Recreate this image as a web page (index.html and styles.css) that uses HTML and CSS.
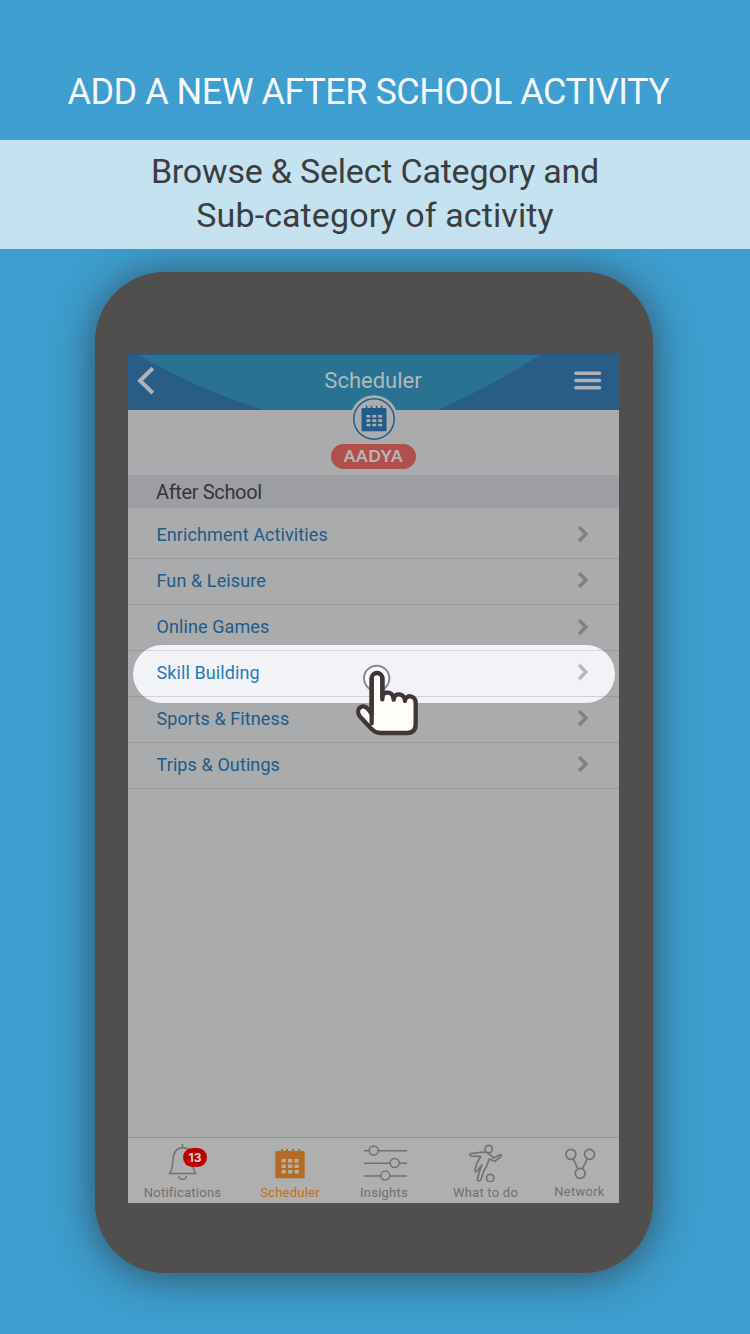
FILE: index.html
```html
<!DOCTYPE html>
<html lang="en">
<head>
<meta charset="utf-8">
<title>Add a new after school activity</title>
<link rel="stylesheet" href="styles.css">
</head>
<body>
<h1 class="headline">ADD A NEW AFTER SCHOOL ACTIVITY</h1>
<div class="banner">
  <div class="banner-first">Browse &amp; Select Category and</div>
  <div class="banner-second">Sub-category of activity</div>
</div>
<main class="phone">
  <div class="screen">
    <header class="topbar">
      <svg class="topbar-art" viewBox="128 354 491 56"><path d="M136.500 354Q194 388 263.500 410H437Q493 386 541 354Z" fill="#297291"/><path d="M128 354.500H619" stroke="#245b88"/></svg>
      <svg class="back" viewBox="0 0 20 30"><path d="M16.800 3.300 4 15.700 16.800 28" fill="none" stroke="#afb2b6" stroke-width="4"/></svg>
      <span class="title">Scheduler</span>
      <svg class="menu" viewBox="0 0 28 20"><path d="M2 3.200H25.500M2 10.500H25.500M2 17.800H25.500" stroke="#afb3b9" stroke-width="3.600" stroke-linecap="round"/></svg>
    </header>
    <section class="profile">
      <svg class="avatar" viewBox="0 0 50 50">
        <circle cx="25" cy="25" r="23.800" fill="#aaacad"/>
        <circle cx="25" cy="25" r="20.200" fill="none" stroke="#235c8b" stroke-width="1.500"/>
        <rect x="12.500" y="14" width="25" height="23.200" rx="1" fill="#235c8b"/>
        <path d="M17.600 11.800v4M22.500 11.800v4M27.600 11.800v4M32.600 11.800v4" stroke="#235c8b" stroke-width="1.500"/>
        <path d="M17.400 22.200h15.800M17.400 26.600h15.800M17.400 31h15.800" stroke="#aaacad" stroke-width="2.600" stroke-dasharray="4 1.900"/>
      </svg>
      <span class="name">AADYA</span>
    </section>
    <h2 class="section">After School</h2>
    <ul class="list">
      <li class="row first"><span>Enrichment Activities</span><svg class="chev" viewBox="0 0 12 18"><path d="M2 2 9 9 2 16"/></svg></li>
      <li class="row"><span>Fun &amp; Leisure</span><svg class="chev" viewBox="0 0 12 18"><path d="M2 2 9 9 2 16"/></svg></li>
      <li class="row"><span>Online Games</span><svg class="chev low" viewBox="0 0 12 18"><path d="M2 2 9 9 2 16"/></svg></li>
      <li class="row active"><span>Skill Building</span><svg class="chev" viewBox="0 0 12 18"><path d="M2 2 9 9 2 16"/></svg></li>
      <li class="row"><span>Sports &amp; Fitness</span><svg class="chev" viewBox="0 0 12 18"><path d="M2 2 9 9 2 16"/></svg></li>
      <li class="row"><span>Trips &amp; Outings</span><svg class="chev" viewBox="0 0 12 18"><path d="M2 2 9 9 2 16"/></svg></li>
    </ul>
    <nav class="tabs">
      <div class="tab tab-bell">
        <svg class="icon" viewBox="0 0 60 44"><path d="M29.500 6v4M16.800 35.500H42.600Q39.500 31 39.500 22C39.500 13 36 9.800 29.500 9.800S20.500 14 20 22Q19.500 31 16.800 35.500ZM25.600 37.500a3.900 4 0 0 0 7.800 0"/></svg>
        <span class="badge">13</span><span class="label">Notifications</span>
      </div>
      <div class="tab tab-cal">
        <svg class="icon" viewBox="0 0 60 44"><g stroke="none"><rect x="15.300" y="13" width="29.400" height="27.200" rx="1.500" fill="#b46c22"/></g><path d="M22 11v4M27 11v4M33 11v4M39 11v4" stroke="#b46c22" stroke-width="2"/><path d="M21.500 22.800h17.500M21.500 28.300h17.500M21.500 33.800h17.500" stroke="#b1afad" stroke-width="3.400" stroke-dasharray="4.300 2.200"/></svg>
        <span class="label">Scheduler</span>
      </div>
      <div class="tab tab-insights">
        <svg class="icon" viewBox="0 0 60 44"><path d="M10 12.700h5.200M24.200 12.700H53M10 25.300h26.200M45.200 25.300H53M10 38h16.800M35.800 38H53"/><circle cx="19.700" cy="12.500" r="4.500"/><circle cx="40.700" cy="25" r="4.500"/><circle cx="31.300" cy="37.600" r="4.500"/></svg>
        <span class="label">Insights</span>
      </div>
      <div class="tab tab-do">
        <svg class="icon" viewBox="0 0 60 44"><g transform="translate(-15.800 -8) scale(.33333)" stroke-width="5" stroke-linejoin="round"><circle cx="145.500" cy="57" r="11"/><circle cx="150" cy="144" r="11"/><path d="M91 71 130 66Q141 66 149 74L161 84 179 74Q186 74 182 80L164 94 147 87 139 109 132 120 122 149Q116 157 111 149L118 124 125 105 111 123Q104 130 105 119L110 99 122 80 93 78Q87 75 91 71Z"/></g></svg>
        <span class="label">What to do</span>
      </div>
      <div class="tab tab-net">
        <svg class="icon" viewBox="0 0 60 44"><g transform="translate(-109.800 -8) scale(.33333)" stroke-width="5"><circle cx="392" cy="73" r="15"/><circle cx="448" cy="73" r="15"/><circle cx="420" cy="130" r="15"/><path d="M399 87 413 116M441 87 427 116"/></g></svg>
        <span class="label">Network</span>
      </div>
    </nav>
  </div>
  <svg class="hand" viewBox="0 0 300 330">
    <circle cx="110" cy="115" r="38" fill="#fff" fill-opacity=".65" stroke="#8c8587" stroke-width="6"/>
    <path d="M95 222V115A16 16 0 0 1 127 115V171C127 154 157 151 161 175C166 158 188 159 195 178C202 162 227 168 227 188V253Q227 279 202 279H122Q105 279 94 266L61 231C42 207 68 187 85 208L95 222Z" fill="#fffdf8" stroke="#403638" stroke-width="13" stroke-linejoin="round"/>
    <path d="M95 115V250M127 112V178M161 171V179M195 174V183" fill="none" stroke="#403638" stroke-width="13" stroke-linecap="round"/>
  </svg>
</main>
</body>
</html>
```
FILE: styles.css
```css
* { box-sizing: border-box; }
body {
  margin: 0;
  width: 750px;
  height: 1334px;
  overflow: hidden;
  background: #3d9ecf;
  font-family: Roboto, "Liberation Sans", sans-serif;
}
.headline {
  margin: 0;
  height: 140px;
  padding: 71px 0 0 67.500px;
  color: #f4f8fc;
  font-size: 36px;
  font-weight: 400;
  line-height: 42px;
  letter-spacing: -.5px;
  white-space: nowrap;
}
.banner {
  position: relative;
  z-index: 1;
  height: 109px;
  padding-top: 9px;
  background: rgba(255, 255, 255, .7);
  color: #3b3d40;
  font-size: 34px;
  line-height: 44px;
  text-align: center;
  white-space: nowrap;
}
.banner-first { letter-spacing: -.2px; }
.banner-second { letter-spacing: .1px; }
.phone {
  position: relative;
  width: 558px;
  height: 1001px;
  margin: 23px 0 0 95px;
  padding: 82px 34px 70px 33px;
  border-radius: 70px;
  background: #514e4e;
  box-shadow: 0 3px 42px rgba(45, 50, 55, .75);
}
.screen {
  display: flex;
  flex-direction: column;
  height: 849px;
  background: #a9abad;
}
.topbar {
  position: relative;
  display: flex;
  justify-content: space-between;
  height: 56px;
  background: #295d88;
}
.topbar-art { position: absolute; inset: 0; width: 491px; height: 56px; }
.back { position: relative; width: 20px; height: 30px; margin: 11px 0 0 8px; }
.title { position: relative; margin: 13px 0 0 16.500px; color: #afb9c0; font-size: 22px; line-height: 27px; }
.menu { position: relative; width: 28px; height: 20px; margin: 16px 17.500px 0 0; }
.profile {
  position: relative;
  display: flex;
  flex-direction: column;
  align-items: center;
  height: 65px;
}
.avatar { width: 50px; height: 50px; margin-top: -15.700px; flex: none; }
.name {
  width: 85px;
  height: 25px;
  border-radius: 13px;
  background: #b14f4d;
  color: #bab2b2;
  font: 900 16.500px/24px Lato, sans-serif;
  letter-spacing: .7px;
  text-align: center;
}
.section {
  margin: 0;
  height: 33px;
  padding-left: 28px;
  background: #9d9ea3;
  color: #353537;
  font-size: 20px;
  font-weight: 400;
  line-height: 35px;
  letter-spacing: -.35px;
}
.list { margin: 0; padding: 0; list-style: none; color: #1f5b87; font-size: 18px; letter-spacing: .1px; }
.row {
  position: relative;
  display: flex;
  align-items: center;
  justify-content: space-between;
  height: 46px;
  padding: 0 30px 2px 28.500px;
  border-bottom: 1px solid #98999c;
}
.first { height: 51px; padding-top: 4px; }
.row span, .chev { position: relative; }
.chev { width: 12px; height: 18px; margin-top: -1px; fill: none; stroke: #7e8082; stroke-width: 3.300px; }
.low { margin-top: 1px; }
.active { color: #1f7dbd; }
.active::before {
  content: "";
  position: absolute;
  top: -6px;
  left: 5px;
  width: 482px;
  height: 58px;
  border-radius: 29px;
  background: linear-gradient(#f1f3f7 5px, #d5d7db 5px 6px, #f1f3f7 6px 51px, #d0d2d6 51px 52px, #f1f3f7 52px);
}
.active .chev { stroke: #b5b6be; }
.tabs {
  display: flex;
  height: 66px;
  margin-top: auto;
  border-top: 1px solid #919193;
  background: #afafaf;
  color: #707071;
  font-size: 13px;
  letter-spacing: .24px;
}
.tab { position: relative; display: flex; flex-direction: column; align-items: center; }
.tab-bell { width: 109px; }
.tab-cal { width: 106px; color: #bd7020; }
.tab-insights { width: 82px; }
.tab-do { width: 121px; }
.tab-net { width: 67px; }
.icon { width: 60px; height: 44px; flex: none; fill: none; stroke: #717172; stroke-width: 1.500px; }
.label { margin-top: 3px; line-height: 16px; white-space: nowrap; }
.tab-net .label { margin-top: 2px; }
.badge {
  position: absolute;
  top: 10px;
  left: 55px;
  width: 24px;
  height: 19px;
  border-radius: 10px;
  background: #bc0000;
  color: #d8d4d4;
  font: 700 12px/19px Inter, sans-serif;
  letter-spacing: 0;
  text-align: center;
}
.hand { position: absolute; top: 368px; left: 245px; width: 100px; height: 110px; }
```
